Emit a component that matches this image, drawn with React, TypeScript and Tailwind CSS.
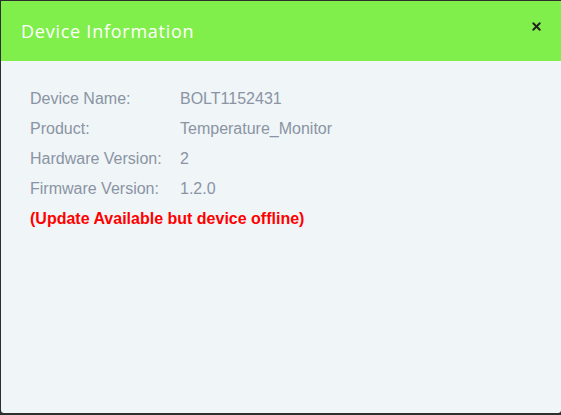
import { X } from 'lucide-react';

const rows = [
  { label: 'Device Name:', value: 'BOLT1152431' },
  { label: 'Product:', value: 'Temperature_Monitor' },
  { label: 'Hardware Version:', value: '2' },
  { label: 'Firmware Version:', value: '1.2.0' },
];

export default function App() {
  return (
    <div className="w-[561px] h-[415px] bg-[#2e2e2e] pt-px pl-px pb-[2px]">
      <div className="flex h-full flex-col overflow-hidden rounded-b-[3px] bg-[#f0f5f8]">
        <div className="flex h-[60px] items-center justify-between bg-[#80ef4c] pl-5 pr-[15px]">
          <h1 className="text-[18px] font-medium tracking-[0.75px] text-white" style={{ fontFamily: '"Open Sans", sans-serif' }}>
            Device Information
          </h1>
          <button className="mb-[10px] flex h-5 w-5 items-center justify-center text-[#222]">
            <X size={13} strokeWidth={3.5} />
          </button>
        </div>
        <div className="pl-[29px] pt-[23px] text-[16px]" style={{ fontFamily: '"Liberation Sans", Arial, sans-serif' }}>
          {rows.map((r) => (
            <div key={r.label} className="flex h-[30px] items-center">
              <span className="w-[150px] text-[#8a94a3]">{r.label}</span>
              <span className="text-[#8a94a3]">{r.value}</span>
            </div>
          ))}
          <div className="flex h-[30px] items-center font-bold text-[#ff0000]">
            (Update Available but device offline)
          </div>
        </div>
      </div>
    </div>
  );
}
